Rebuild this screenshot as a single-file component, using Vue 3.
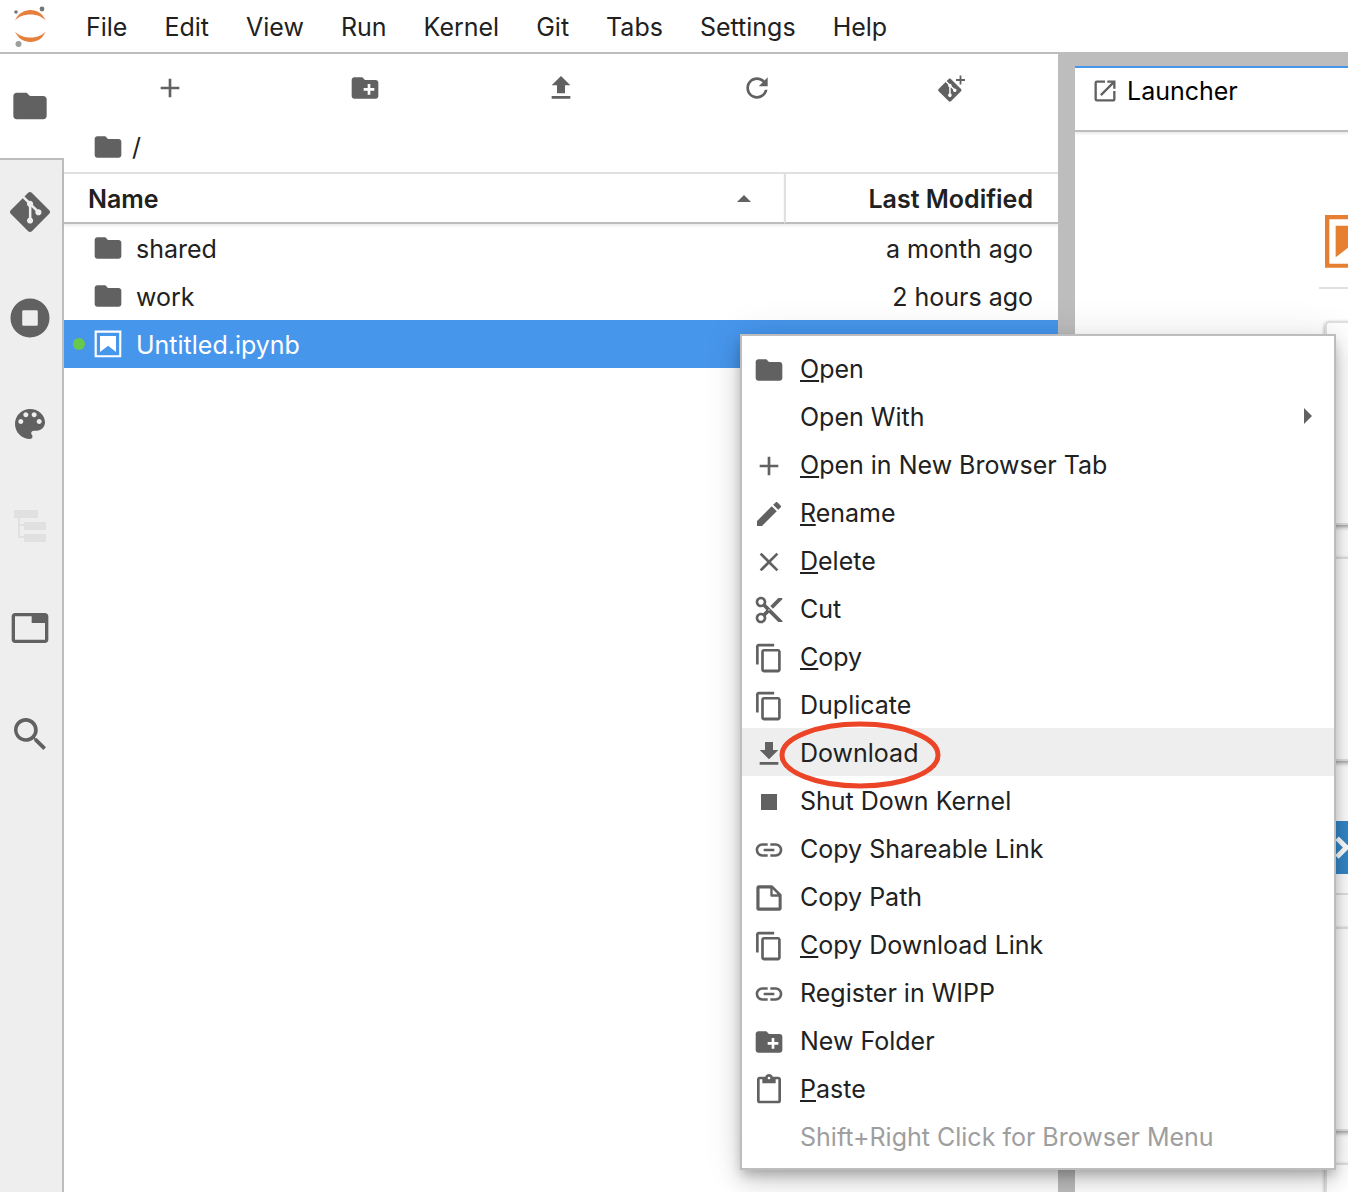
<script setup>
const menus = ['File', 'Edit', 'View', 'Run', 'Kernel', 'Git', 'Tabs', 'Settings', 'Help']

const git = 'M23.546 10.93L13.067.452c-.604-.603-1.582-.603-2.188 0L8.708 2.627l2.76 2.76c.645-.215 1.379-.07 1.889.441.516.515.658 1.258.438 1.9l2.658 2.66c.645-.223 1.387-.078 1.9.435.721.72.721 1.884 0 2.604-.719.719-1.881.719-2.6 0-.539-.541-.674-1.337-.404-1.996L12.86 8.955v6.525c.176.086.342.203.488.348.713.721.713 1.883 0 2.6-.719.721-1.889.721-2.609 0-.719-.719-.719-1.879 0-2.598.182-.18.387-.316.605-.406V8.835c-.217-.091-.424-.222-.6-.401-.545-.545-.676-1.342-.396-2.009L7.636 3.7.45 10.881c-.6.605-.6 1.584 0 2.189l10.48 10.477c.604.604 1.582.604 2.186 0l10.43-10.43c.605-.603.605-1.582 0-2.187'

const icons = {
  folder: { box: '0 0 24 24', d: 'M10 4H4c-1.1 0-1.99.9-1.99 2L2 18c0 1.1.9 2 2 2h16c1.1 0 2-.9 2-2V8c0-1.1-.9-2-2-2h-8l-2-2z' },
  git: { box: '0 0 24 24', d: git },
  running: { box: '0 0 40 40', d: 'M20 .5a19.5 19.5 0 1 0 0 39a19.5 19.5 0 1 0 0-39zM13.5 12.2h13a1.3 1.3 0 0 1 1.3 1.3v13a1.3 1.3 0 0 1-1.3 1.3h-13a1.3 1.3 0 0 1-1.3-1.3v-13a1.3 1.3 0 0 1 1.3-1.3z' },
  palette: { box: '0 0 24 24', d: 'M12 3c-4.97 0-9 4.03-9 9s4.03 9 9 9c.83 0 1.5-.67 1.5-1.5 0-.39-.15-.74-.39-1.01-.23-.26-.38-.61-.38-.99 0-.83.67-1.5 1.5-1.5H16c2.76 0 5-2.24 5-5 0-4.42-4.03-8-9-8zm-5.5 9c-.83 0-1.5-.67-1.5-1.5S5.67 9 6.5 9 8 9.67 8 10.5 7.33 12 6.5 12zm3-4C8.67 8 8 7.33 8 6.5S8.67 5 9.5 5s1.5.67 1.5 1.5S10.33 8 9.5 8zm5 0c-.83 0-1.5-.67-1.5-1.5S13.67 5 14.5 5s1.5.67 1.5 1.5S15.33 8 14.5 8zm3 4c-.83 0-1.5-.67-1.5-1.5S16.67 9 17.5 9s1.5.67 1.5 1.5-.67 1.5-1.5 1.5z' },
  toc: { box: '0 0 40 40', d: 'M4 4h24v8H4zM8 12h2v16H8zM10 18h4v2h-4zM8 28h2v4H8zM10 30h4v2h-4zM14 16h22v8H14zM14 28h22v8H14z' },
  tabs: { box: '0 0 24 24', d: 'M21 3H3c-1.1 0-2 .9-2 2v14c0 1.1.9 2 2 2h18c1.1 0 2-.9 2-2V5c0-1.1-.9-2-2-2zm0 16H3V5h10v4h8v10z' },
  search: { box: '0 0 18 18', d: 'M12.1,10.9h-0.7l-0.2-0.2c0.8-0.9,1.3-2.2,1.3-3.5c0-3-2.4-5.4-5.4-5.4S1.8,4.2,1.8,7.1s2.4,5.4,5.4,5.4c1.3,0,2.5-0.5,3.5-1.3l0.2,0.2v0.7l4.1,4.1l1.2-1.2L12.1,10.9z M7.1,10.9c-2.1,0-3.7-1.7-3.7-3.7s1.7-3.7,3.7-3.7s3.7,1.7,3.7,3.7S9.2,10.9,7.1,10.9z' },
  add: { box: '0 0 24 24', d: 'M19 13h-6v6h-2v-6H5v-2h6V5h2v6h6v2z' },
  newFolder: { box: '0 0 24 24', d: 'M20 6h-8l-2-2H4c-1.11 0-1.99.89-1.99 2L2 18c0 1.11.89 2 2 2h16c1.11 0 2-.89 2-2V8c0-1.11-.89-2-2-2zm-1 8h-3v3h-2v-3h-3v-2h3V9h2v3h3v2z' },
  upload: { box: '0 0 24 24', d: 'M5 20h14v-2H5v2zm0-10h4v6h6v-6h4l-7-7-7 7z' },
  refresh: { box: '0 0 18 18', d: 'M9 13.5c-2.49 0-4.5-2.01-4.5-4.5S6.51 4.5 9 4.5c1.24 0 2.36.52 3.17 1.33L10 8h5V3l-1.76 1.76C12.15 3.68 10.66 3 9 3 5.69 3 3.01 5.69 3.01 9S5.69 15 9 15c2.97 0 5.43-2.16 5.9-5h-1.52c-.46 2-2.24 3.5-4.38 3.5z' },
  notebook: { box: '0 0 22 22', d: 'M18.7 3.3v15.4H3.3V3.3h15.4m1.5-1.5H1.8v18.3h18.3l.1-18.3zM16.5 16.5l-5.4-4.3-5.6 4.3v-11h11z' },
  launcher: { box: '0 0 24 24', d: 'M19 19H5V5h7V3H5a2 2 0 00-2 2v14a2 2 0 002 2h14c1.1 0 2-.9 2-2v-7h-2v7zM14 3v2h3.59l-9.83 9.83 1.41 1.41L19 6.41V10h2V3h-7z' },
  edit: { box: '0 0 24 24', d: 'M3 17.25V21h3.75L17.81 9.94l-3.75-3.75L3 17.25zM20.71 7.04c.39-.39.39-1.02 0-1.41l-2.34-2.34c-.39-.39-1.02-.39-1.41 0l-1.83 1.83 3.75 3.75 1.83-1.83z' },
  close: { box: '0 0 24 24', d: 'M19 6.41L17.59 5 12 10.59 6.41 5 5 6.41 10.59 12 5 17.59 6.41 19 12 13.41 17.59 19 19 17.59 13.41 12z' },
  cut: { box: '0 0 24 24', d: 'M9.64 7.64c.23-.5.36-1.05.36-1.64 0-2.21-1.79-4-4-4S2 3.79 2 6s1.79 4 4 4c.59 0 1.14-.13 1.64-.36L10 12l-2.36 2.36C7.14 14.13 6.59 14 6 14c-2.21 0-4 1.79-4 4s1.79 4 4 4 4-1.79 4-4c0-.59-.13-1.14-.36-1.64L12 14l7 7h3v-1L9.64 7.64zM6 8c-1.1 0-2-.89-2-2s.9-2 2-2 2 .89 2 2-.9 2-2 2zm0 12c-1.1 0-2-.89-2-2s.9-2 2-2 2 .89 2 2-.9 2-2 2zm6-7.5c-.28 0-.5-.22-.5-.5s.22-.5.5-.5.5.22.5.5-.22.5-.5.5zM19 3l-6 6 2 2 7-7V3z' },
  copy: { box: '0 0 18 18', d: 'M11.9,1H3.2C2.4,1,1.7,1.7,1.7,2.5v10.2h1.5V2.5h8.7V1z M14.1,3.9h-8c-0.8,0-1.5,0.7-1.5,1.5v10.2c0,0.8,0.7,1.5,1.5,1.5h8c0.8,0,1.5-0.7,1.5-1.5V5.4C15.5,4.6,14.9,3.9,14.1,3.9z M14.1,15.5h-8V5.4h8V15.5z' },
  download: { box: '0 0 24 24', d: 'M19 9h-4V3H9v6H5l7 7 7-7zM5 18v2h14v-2H5z' },
  stop: { box: '0 0 24 24', d: 'M6 6h12v12H6z' },
  link: { box: '0 0 24 24', d: 'M3.9 12c0-1.71 1.39-3.1 3.1-3.1h4V7H7c-2.76 0-5 2.24-5 5s2.24 5 5 5h4v-1.9H7c-1.71 0-3.1-1.39-3.1-3.1zM8 13h8v-2H8v2zm9-6h-4v1.9h4c1.71 0 3.1 1.39 3.1 3.1s-1.39 3.1-3.1 3.1h-4V17h4c2.76 0 5-2.24 5-5s-2.24-5-5-5z' },
  file: { box: '0 0 22 22', d: 'M19.3 8.2l-5.5-5.5c-.3-.3-.7-.5-1.2-.5H3.9c-.8.1-1.6.9-1.6 1.8v14.1c0 .9.7 1.6 1.6 1.6h14.2c.9 0 1.6-.7 1.6-1.6V9.4c.1-.5-.1-.9-.4-1.2zm-5.8-3.3l3.4 3.6h-3.4V4.9zm3.9 12.7H4.7c-.1 0-.2 0-.2-.2V4.7c0-.2.1-.3.2-.3h7.2v4.4s0 .8.3 1.1c.3.3 1.1.3 1.1.3h4.3v7.2s-.1.2-.2.2z' },
  paste: { box: '0 0 24 24', d: 'M19 2h-4.18C14.4.84 13.3 0 12 0c-1.3 0-2.4.84-2.82 2H5c-1.1 0-2 .9-2 2v16c0 1.1.9 2 2 2h14c1.1 0 2-.9 2-2V4c0-1.1-.9-2-2-2zm-7 0c.55 0 1 .45 1 1s-.45 1-1 1-1-.45-1-1 .45-1 1-1zm7 18H5V4h2v3h10V4h2v16z' }
}

const sideTabs = [
  { icon: 'folder', name: 'File Browser', active: true },
  { icon: 'git', name: 'Git' },
  { icon: 'running', name: 'Running Terminals and Kernels' },
  { icon: 'palette', name: 'Commands' },
  { icon: 'toc', name: 'Table of Contents', faded: true },
  { icon: 'tabs', name: 'Open Tabs' },
  { icon: 'search', name: 'Search' }
]

const tools = [
  { icon: 'add', name: 'New Launcher' },
  { icon: 'newFolder', name: 'New Folder' },
  { icon: 'upload', name: 'Upload Files' },
  { icon: 'refresh', name: 'Refresh File List' }
]

const files = [
  { icon: 'folder', name: 'shared', modified: 'a month ago' },
  { icon: 'folder', name: 'work', modified: '2 hours ago' },
  { icon: 'notebook', name: 'Untitled.ipynb', modified: '', selected: true }
]

// `key` is the underlined mnemonic, `rest` the remainder of the label
const actions = [
  { icon: 'folder', key: 'O', rest: 'pen' },
  { rest: 'Open With', submenu: true },
  { icon: 'add', key: 'O', rest: 'pen in New Browser Tab' },
  { icon: 'edit', key: 'R', rest: 'ename' },
  { icon: 'close', key: 'D', rest: 'elete' },
  { icon: 'cut', rest: 'Cut' },
  { icon: 'copy', key: 'C', rest: 'opy' },
  { icon: 'copy', rest: 'Duplicate' },
  { icon: 'download', rest: 'Download', active: true },
  { icon: 'stop', rest: 'Shut Down Kernel' },
  { icon: 'link', rest: 'Copy Shareable Link' },
  { icon: 'file', rest: 'Copy Path' },
  { icon: 'copy', key: 'C', rest: 'opy Download Link' },
  { icon: 'link', rest: 'Register in WIPP' },
  { icon: 'newFolder', rest: 'New Folder' },
  { icon: 'paste', key: 'P', rest: 'aste' },
  { rest: 'Shift+Right Click for Browser Menu', disabled: true }
]
</script>

<template>
  <div class="app">
    <header class="menubar">
      <svg class="logo" viewBox="0 0 60 52" aria-hidden="true">
        <g fill="#e77f3c">
          <path d="M15 20.500C18 13.500 24 10 30.500 10S43 13.500 45.500 20.500C42 16.500 36.500 14.500 30.500 14.500S18.500 16.500 15 20.500z" />
          <path d="M15 31.500C18 38.500 24 42 30.500 42S43 38.500 45.500 31.500C42 35.500 36.500 37.500 30.500 37.500S18.500 35.500 15 31.500z" />
        </g>
        <circle cx="16" cy="12" r="1.800" fill="#757575" />
        <circle cx="42" cy="9" r="2.400" fill="#757575" />
        <circle cx="18.500" cy="44" r="3" fill="#9e9e9e" />
      </svg>
      <nav class="menus">
        <button v-for="m in menus" :key="m" type="button">{{ m }}</button>
      </nav>
    </header>

    <div class="body">
      <aside class="sidebar">
        <button
          v-for="t in sideTabs"
          :key="t.name"
          type="button"
          :class="['side-tab', { active: t.active, faded: t.faded }]"
          :aria-label="t.name"
        >
          <svg :viewBox="icons[t.icon].box" fill-rule="evenodd"><path :d="icons[t.icon].d" /></svg>
        </button>
      </aside>

      <section class="browser">
        <div class="toolbar">
          <button v-for="t in tools" :key="t.name" type="button" :aria-label="t.name">
            <svg class="icon" :viewBox="icons[t.icon].box"><path :d="icons[t.icon].d" /></svg>
          </button>
          <button type="button" aria-label="Git Clone">
            <svg class="icon" viewBox="0 0 32 32">
              <path :d="git" transform="translate(2.200 6.500) scale(.97)" />
              <path d="M23.600 3.500h1.800v3.600h3.600v1.800h-3.600v3.600h-1.800v-3.600h-3.600v-1.800h3.600z" />
            </svg>
          </button>
        </div>
        <div class="crumbs">
          <svg class="icon" :viewBox="icons.folder.box"><path :d="icons.folder.d" /></svg>
          <a href="#">/</a>
        </div>
        <table class="files">
          <thead>
            <tr>
              <th class="name-col">
                <div class="head">
                  <span class="text">Name</span>
                  <svg viewBox="0 0 14 7" class="sort"><path d="M0 7L7 0l7 7z" /></svg>
                </div>
              </th>
              <th class="date-col"><div class="text">Last Modified</div></th>
            </tr>
          </thead>
          <tbody>
            <tr v-for="f in files" :key="f.name" :class="{ selected: f.selected }">
              <td>
                <div class="file">
                  <span class="dot"></span>
                  <svg class="icon" :viewBox="icons[f.icon].box"><path :d="icons[f.icon].d" /></svg>
                  <span class="text">{{ f.name }}</span>
                </div>
              </td>
              <td class="date-col"><div class="text">{{ f.modified }}</div></td>
            </tr>
          </tbody>
        </table>
      </section>

      <div class="splitter"></div>

      <main class="dock">
        <div class="dock-tab">
          <svg :viewBox="icons.launcher.box"><path :d="icons.launcher.d" /></svg>
          <span>Launcher</span>
        </div>
        <div class="launcher">
          <section class="group">
            <div class="group-head">
              <svg viewBox="1.800 1.800 18.400 18.400" fill="#e68030"><path :d="icons.notebook.d" /></svg>
            </div>
            <div class="card"></div>
            <div class="card"></div>
          </section>
          <section class="group">
            <div class="group-head">
              <svg viewBox="20 20 160 160">
                <path fill="#3487c9" d="M20 20h160v160H20z" />
                <path fill="#fff" d="M105 127.300h40v12.800h-40zM51.100 77L74 99.900l-23.300 23.300 10.500 10.500 23.300-23.300L95 99.900 84.500 89.400 61.600 66.500z" />
              </svg>
            </div>
            <div class="card"></div>
            <div class="card"></div>
          </section>
        </div>
      </main>
    </div>

    <ul class="context" role="menu">
      <li v-for="(a, i) in actions" :key="i" role="none">
        <button type="button" role="menuitem" :disabled="a.disabled" :class="{ active: a.active }">
          <span class="slot">
            <svg v-if="a.icon" class="icon" :viewBox="icons[a.icon].box"><path :d="icons[a.icon].d" /></svg>
          </span>
          <span class="label text"><u v-if="a.key">{{ a.key }}</u>{{ a.rest }}</span>
          <svg v-if="a.submenu" class="arrow" viewBox="0 0 8 16"><path d="M0 0l8 8-8 8z" /></svg>
          <svg v-if="a.active" class="ring" viewBox="0 0 162 68">
            <ellipse cx="81" cy="34" rx="78" ry="31" fill="none" stroke="#ec4427" stroke-width="5" />
          </svg>
        </button>
      </li>
    </ul>
  </div>
</template>

<style>
body {
  margin: 0;
}
</style>

<style scoped>
.app {
  position: relative;
  display: flex;
  flex-direction: column;
  min-height: 100vh;
  overflow: hidden;
  background: #fff;
  color: #212121;
  font: 25px/48px Inter, "Liberation Sans", sans-serif;
}
button {
  margin: 0;
  padding: 0;
  border: 0;
  background: none;
  color: inherit;
  font: inherit;
}
svg {
  display: block;
  flex: none;
}
.icon {
  width: 32px;
  height: 32px;
  fill: #616161;
}
.text {
  padding-top: 2px;
  line-height: 46px;
}

.menubar {
  display: flex;
  height: 52px;
  border-bottom: 2px solid #bdbdbd;
}
.logo {
  width: 60px;
  height: 52px;
}
.menus {
  display: flex;
  gap: 1px;
  padding-left: 8px;
}
.menus button {
  padding: 2px 18px 0;
  line-height: 50px;
}

.body {
  display: flex;
  flex: 1;
}
.sidebar {
  display: flex;
  flex-direction: column;
  flex: none;
  width: 64px;
  background: linear-gradient(#bdbdbd, #bdbdbd) right / 2px 100% no-repeat #eee;
}
.side-tab {
  display: flex;
  align-items: center;
  height: 104px;
  margin-top: 2px;
  padding-left: 10px;
  fill: #616161;
}
.side-tab svg {
  width: 40px;
  height: 40px;
}
.side-tab.active {
  height: 106px;
  margin: 0;
  border-bottom: 2px solid #bdbdbd;
  background: #fff;
}
.side-tab.active + .side-tab {
  margin-top: 0;
}
.side-tab.faded {
  height: 96px;
  fill: #e0e0e0;
}

.browser {
  flex: 994 1 0;
  min-width: 0;
}
.toolbar {
  display: flex;
  height: 68px;
  padding: 0 8px;
}
.toolbar button {
  display: flex;
  flex: 1;
  align-items: center;
  justify-content: center;
}
.crumbs {
  display: flex;
  align-items: center;
  gap: 8px;
  height: 50px;
  padding-left: 28px;
}
.crumbs a {
  color: inherit;
  text-decoration: none;
}
.files {
  width: 100%;
  table-layout: fixed;
  border-collapse: separate;
  border-spacing: 0;
}
.files th {
  padding: 0;
  border-top: 2px solid #e0e0e0;
  border-bottom: 2px solid #bdbdbd;
  box-shadow: 0 2px 2px rgba(0, 0, 0, .08);
  font-weight: 600;
  text-align: left;
}
.files td {
  padding: 0;
}
.files .date-col {
  width: 247px;
  padding-right: 25px;
  text-align: right;
}
.files th.date-col {
  border-left: 2px solid #e0e0e0;
}
.head {
  display: flex;
  align-items: center;
  justify-content: space-between;
  padding: 0 33px 0 24px;
}
.sort {
  width: 14px;
  height: 7px;
  fill: #616161;
}
.file {
  display: flex;
  align-items: center;
  height: 48px;
  padding-left: 9px;
}
.dot {
  width: 12px;
  height: 12px;
  margin-right: 7px;
  border-radius: 50%;
}
.file .icon {
  margin-right: 12px;
}
.selected {
  background: #4696ec;
  color: #fff;
}
.selected .icon {
  fill: #fff;
}
.selected .dot {
  background: #68c84d;
}

.splitter {
  flex: none;
  width: 17px;
  background: #bdbdbd;
}
.dock {
  flex: 273 1 0;
  min-width: 0;
  overflow: hidden;
  border-top: 12px solid #bdbdbd;
}
.dock-tab {
  display: flex;
  align-items: center;
  gap: 8px;
  height: 46px;
  padding: 0 0 16px 16px;
  border-top: 2px solid #4696ec;
  border-bottom: 2px solid #bdbdbd;
  box-shadow: 0 2px 2px rgba(0, 0, 0, .08);
  color: #000;
}
.dock-tab svg {
  width: 28px;
  height: 28px;
  fill: #616161;
}
.launcher {
  height: 0;
  padding: 55px 0 0 244px;
}
.group {
  width: 640px;
  padding-top: 28px;
}
.group-head {
  margin-bottom: 32px;
  padding: 0 0 19px 6px;
  border-bottom: 2px solid #e0e0e0;
}
.group-head svg {
  width: 53px;
  height: 53px;
}
.card {
  box-sizing: border-box;
  width: 200px;
  height: 204px;
  margin: 0 0 32px 6px;
  border: 2px solid #e0e0e0;
  border-radius: 4px;
  box-shadow: 0 2px 4px rgba(0, 0, 0, .4);
}

.context {
  position: absolute;
  top: 334px;
  left: 740px;
  box-sizing: border-box;
  width: 596px;
  margin: 0;
  padding: 8px 0;
  border: 2px solid #bdbdbd;
  background: #fff;
  box-shadow: 0 6px 10px -2px rgba(0, 0, 0, .2), 0 12px 20px rgba(0, 0, 0, .14), 0 2px 36px rgba(0, 0, 0, .12);
  list-style: none;
}
.context button {
  position: relative;
  display: flex;
  align-items: center;
  width: 100%;
  height: 48px;
  padding: 0 22px 0 11px;
  text-align: left;
}
.context button:disabled {
  color: #9e9e9e;
}
.context .active {
  background: #eee;
}
.slot {
  width: 47px;
  padding-top: 4px;
}
.label {
  flex: 1;
  white-space: nowrap;
}
.label u {
  text-decoration-thickness: 2px;
  text-underline-offset: 2px;
  text-decoration-skip-ink: none;
}
.arrow {
  width: 8px;
  height: 16px;
  fill: #616161;
}
.ring {
  position: absolute;
  z-index: 1;
  top: -7px;
  left: 37px;
  width: 162px;
  height: 68px;
}
</style>
